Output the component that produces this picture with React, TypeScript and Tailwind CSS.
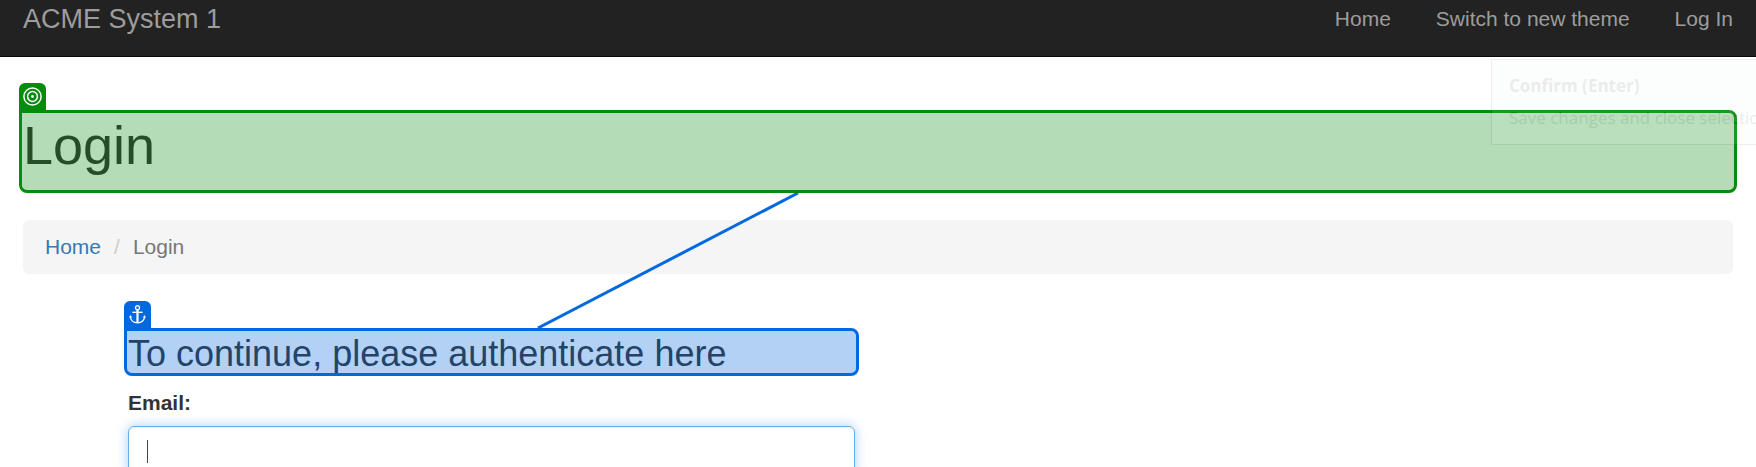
import type { ReactNode } from "react";

function TargetIcon() {
  return (
    <svg width="19" height="19" viewBox="0 0 19 19" fill="none" stroke="white" strokeWidth="1.5" aria-hidden="true">
      <circle cx="9.5" cy="9.5" r="8.6" />
      <circle cx="9.5" cy="9.5" r="4.9" />
      <circle cx="9.5" cy="9.5" r="1.4" fill="white" stroke="none" />
    </svg>
  );
}

function AnchorIcon() {
  return (
    <svg width="19" height="19" viewBox="0 0 19 19" fill="none" stroke="white" aria-hidden="true">
      <circle cx="9.5" cy="2.7" r="2" strokeWidth="1.3" />
      <path d="M9.5 4.8v13" strokeWidth="2.2" />
      <path d="M4.3 7.3h10.4" strokeWidth="1.3" />
      <path d="M2.4 11c0 4.2 2.9 6.9 7.1 6.9s7.1-2.7 7.1-6.9" strokeWidth="1.4" />
      <path d="M1.6 12.6l.8-2 1.2 1.8M17.4 12.6l-.8-2-1.2 1.8" strokeWidth="0.8" />
    </svg>
  );
}

type HighlightProps = {
  tone: "target" | "anchor";
  className: string;
  children: ReactNode;
};

/* Wraps an element with a tinted frame and an icon tab on its top-left corner. */
function Highlight({ tone, className, children }: HighlightProps) {
  const isTarget = tone === "target";
  return (
    <div className={`relative -mx-1 px-1 ${className}`}>
      {children}
      <div
        className={`pointer-events-none absolute inset-0 rounded-lg rounded-tl-none border-3 bg-clip-padding ${
          isTarget ? "border-[#058c0c] bg-[#058c0c]/30" : "border-[#0069e0] bg-[#0069e0]/30"
        }`}
      />
      <div
        className={`absolute bottom-full left-0 flex size-[27px] items-center justify-center rounded-t-md ${
          isTarget ? "bg-[#058c0c]" : "bg-[#0069e0]"
        }`}
      >
        {isTarget ? <TargetIcon /> : <AnchorIcon />}
      </div>
      {!isTarget && (
        <svg
          className="pointer-events-none absolute bottom-full left-[413px]"
          width="263"
          height="135"
          fill="none"
          aria-hidden="true"
        >
          <path d="M1 135L261 0" stroke="#0069e0" strokeWidth="3" />
        </svg>
      )}
    </div>
  );
}

export default function App() {
  return (
    <div className="relative h-screen overflow-hidden bg-white font-['Liberation_Sans',Arial,sans-serif] text-[21px] leading-[30px] text-[#333]">
      <header className="flex h-[57px] justify-between border-b border-[#080808] bg-[#222] px-[23px] text-[#9d9d9d]">
        <a href="#" className="pt-1 text-[27px] leading-[30px]">
          ACME System 1
        </a>
        <nav className="flex gap-[45px] pt-1">
          <a href="#">Home</a>
          <a href="#">Switch to new theme</a>
          <a href="#">Log In</a>
        </nav>
      </header>

      <main className="px-[23px] pt-[53px]">
        <Highlight tone="target" className="pt-[5px] pb-[18px]">
          <h1 className="text-[54px] leading-[60px]">Login</h1>
        </Highlight>

        <nav aria-label="Breadcrumb" className="mt-[27px] rounded-md bg-[#f5f5f5] px-[22px] py-3">
          <ol className="flex gap-[13px]">
            <li>
              <a href="#" className="text-[#337ab7]">
                Home
              </a>
            </li>
            <li aria-hidden="true" className="text-[#ccc]">
              /
            </li>
            <li className="text-[#777]">Login</li>
          </ol>
        </nav>

        <form className="mt-[54px] grid grid-cols-[105px_727fr_878fr]">
          <div className="col-start-2">
            <Highlight tone="anchor" className="pt-1.5 pb-0.5">
              <h3 className="text-4xl leading-[40px]">To continue, please authenticate here</h3>
            </Highlight>
            <label htmlFor="email" className="mt-3 mb-2 block font-bold">
              Email:
            </label>
            <div className="relative">
              <input
                id="email"
                type="email"
                className="block h-[51px] w-full rounded-md border border-[#66afe9] px-[18px] text-[#555] caret-transparent shadow-[inset_0_1px_2px_rgba(0,0,0,0.075),0_0_12px_rgba(102,175,233,0.6)] outline-none"
              />
              <span aria-hidden="true" className="absolute top-[14px] left-[19px] h-[23px] w-px bg-[#444]" />
            </div>
          </div>
        </form>
      </main>

      <div
        role="tooltip"
        className="absolute top-[59px] -right-[36px] w-[301px] border border-[#555] bg-[#e6faf0] px-[17px] py-2.5 font-['Open_Sans','Noto_Sans',sans-serif] text-[17px] leading-[32px] whitespace-nowrap text-[#444] opacity-10"
      >
        <p className="font-bold">Confirm (Enter)</p>
        <p>Save changes and close selection</p>
      </div>
    </div>
  );
}
